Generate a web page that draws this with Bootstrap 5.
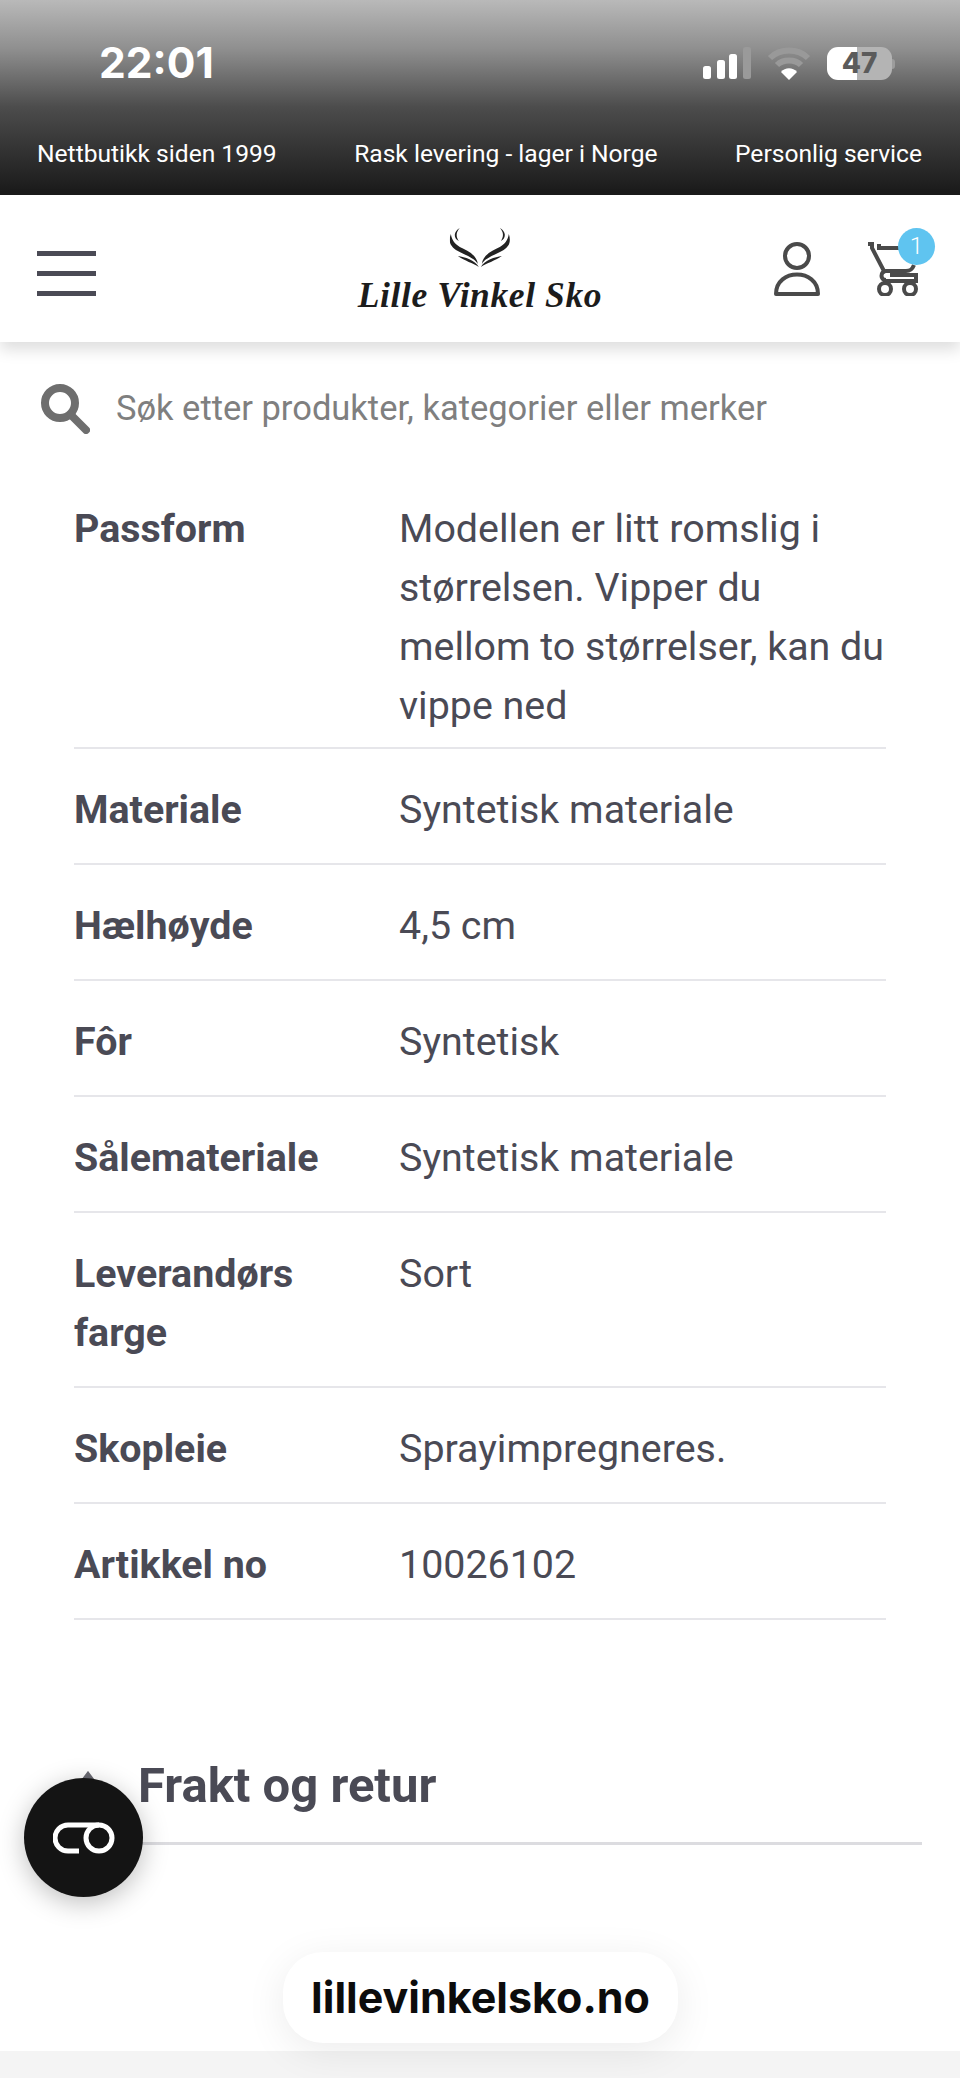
<!DOCTYPE html>
<html lang="no">
<head>
  <meta charset="UTF-8" />
  <meta name="viewport" content="width=device-width, initial-scale=1" />
  <title>Lille Vinkel Sko</title>
  <link href="https://cdn.jsdelivr.net/npm/bootstrap@5.3.3/dist/css/bootstrap.min.css" rel="stylesheet" />
  <style>
    body {
      background-color: #fff;
      color: #4a4a55;
      font-family: Roboto, sans-serif;
      min-height: 2078px;
    }

    .top-block {
      background: linear-gradient(#b9b9b9, #8f8f8f 25%, #4c4c4c 55%, #1b1b1b 98%);
      height: 195px;
      color: #fff;
    }

    .status-row {
      height: 127px;
      padding: 43px 65px 0 99px;
    }

    .status-icons {
      padding-top: 4px;
    }

    .clock {
      font-family: Inter, sans-serif;
      font-size: 42.5px;
      font-weight: 700;
      line-height: 40px;
    }

    .battery-pill {
      width: 65px;
      height: 33px;
      border-radius: 11px;
      background: linear-gradient(90deg, #fff 46%, #b4b4b4 46%);
      color: #5b5b5b;
      font-family: Inter, sans-serif;
      font-size: 28px;
      font-weight: 800;
      line-height: 33px;
      text-align: center;
    }

    .battery-nub {
      width: 3px;
      height: 10px;
      background: #9c9c9c;
      border-radius: 0 3px 3px 0;
    }

    .promo-row {
      padding: 0 38px 0 37px;
      font-size: 24.6px;
      line-height: 54px;
    }

    .site-header {
      height: 147px;
      padding: 0 42px 0 37px;
      box-shadow: 0 8px 14px rgba(0, 0, 0, .13);
    }

    .burger {
      width: 59px;
      gap: 15px;
      margin-top: 9px;
    }

    .burger span {
      height: 5px;
      background: #4a4a55;
    }

    .logo-box {
      left: 480px;
      top: 228px;
      transform: translateX(-50%);
    }

    .logo-mark {
      margin-bottom: 11px;
    }

    .logo-text {
      font-family: "Liberation Serif", serif;
      font-style: italic;
      font-weight: 700;
      font-size: 35.5px;
      line-height: 32px;
      color: #1c1c1c;
      letter-spacing: .6px;
      white-space: nowrap;
    }

    .cart-badge {
      width: 37px;
      height: 37px;
      top: -14px;
      right: -17px;
      background: #5fc4f0;
      color: #fff;
      font-size: 24px;
      font-weight: 300;
      line-height: 37px;
      text-align: center;
    }

    .search-row {
      height: 126px;
      padding: 7px 0 0 40px;
      gap: 26px;
    }

    .search-hint {
      color: #7f7f7f;
      font-size: 34.5px;
    }

    .spec-wrap {
      padding: 0 74px;
    }

    .spec-table {
      table-layout: fixed;
      margin: 0;
      font-size: 39.4px;
      line-height: 59px;
      color: #4a4a55;
    }

    .spec-table th,
    .spec-table td {
      padding: 31px 0 24px;
      border-bottom: 2px solid #e6e6ea;
      color: #4a4a55;
    }

    .spec-table tr:first-child th,
    .spec-table tr:first-child td {
      padding-bottom: 12px;
    }

    .spec-table th {
      width: 325px;
      padding-right: 30px;
      font-weight: 700;
    }

    .spec-table td {
      font-weight: 400;
    }

    .shipping-head {
      margin: 126px 38px 0 74px;
      height: 99px;
      gap: 36px;
      border-bottom: 3px solid #dcdce0;
      font-size: 49px;
      font-weight: 700;
      line-height: 80px;
    }

    .shipping-arrow {
      margin-top: 25px;
    }

    .page-band {
      height: 27px;
      background: #f4f4f4;
      margin-top: auto;
    }

    .chat-btn {
      width: 119px;
      height: 119px;
      left: 24px;
      top: 1778px;
      background: #141414;
      box-shadow: 0 6px 26px rgba(0, 0, 0, .25);
    }

    .domain-pill {
      left: 283px;
      top: 1952px;
      width: 395px;
      height: 91px;
      border-radius: 40px;
      background: #fff;
      color: #0c0c0c;
      font-family: Inter, sans-serif;
      font-size: 43px;
      font-weight: 700;
      line-height: 91px;
      text-align: center;
      box-shadow: 0 8px 40px rgba(0, 0, 0, .08);
    }
  </style>
</head>
<body class="d-flex flex-column position-relative overflow-hidden">

  <!-- Phone status bar and promo strip -->
  <div class="top-block">
    <div class="status-row d-flex justify-content-between">
      <div class="clock">22:01</div>
      <div class="status-icons d-flex align-items-center gap-2 align-self-start">
        <svg width="56" height="33" viewBox="0 0 56 33">
          <rect x="0" y="19" width="8" height="13" rx="2.5" fill="#fff"/>
          <rect x="14" y="13" width="8" height="19" rx="2.5" fill="#fff"/>
          <rect x="26" y="7" width="8" height="25" rx="2.5" fill="#fff"/>
          <rect x="40" y="0" width="8" height="32" rx="2.5" fill="#9a9a9a"/>
        </svg>
        <svg width="44" height="33" viewBox="0 0 44 33" class="me-2">
          <path d="M3 11C13 1 31 1 41 11" fill="none" stroke="#999" stroke-width="6"/>
          <path d="M10 18C16 12 28 12 34 18" fill="none" stroke="#999" stroke-width="6"/>
          <path d="M14 25C18 20 26 20 30 25L22 33Z" fill="#fff"/>
        </svg>
        <div class="d-flex align-items-center">
          <div class="battery-pill">47</div>
          <div class="battery-nub"></div>
        </div>
      </div>
    </div>
    <div class="promo-row d-flex justify-content-between">
      <span>Nettbutikk siden 1999</span>
      <span>Rask levering - lager i Norge</span>
      <span>Personlig service</span>
    </div>
  </div>

  <!-- Header -->
  <header class="site-header bg-white d-flex align-items-center justify-content-between position-relative">
    <div class="burger d-flex flex-column"><span></span><span></span><span></span></div>
    <div class="d-flex align-items-center">
      <svg width="46" height="54" viewBox="0 0 46 54" fill="none" stroke="#4a4a4a" stroke-width="4">
        <circle cx="23" cy="14" r="12"/>
        <path d="M2 52C2 26 44 26 44 52Z" stroke-linejoin="round"/>
      </svg>
      <div class="position-relative ms-5">
        <svg width="50" height="54" viewBox="0 0 50 54" fill="none" stroke="#4a4a4a" stroke-width="4" class="d-block">
          <path d="M0 2H4V6L17 31" />
          <path d="M11 2V6H32"/>
          <path d="M46 23C44 28 42 29 38 29H18C12 30 12 38 18 38"/>
          <path d="M22 33H48V39H15"/>
          <circle cx="17" cy="47" r="6"/>
          <circle cx="42" cy="47" r="6"/>
        </svg>
        <div class="cart-badge position-absolute rounded-circle">1</div>
      </div>
    </div>
  </header>

  <!-- Logo sits centred over the header -->
  <div class="logo-box position-absolute text-center">
    <svg width="60" height="40" viewBox="0 0 60 40" fill="#222" class="logo-mark d-block mx-auto">
      <g id="antler">
        <path d="M10 0C4 3 3 10 9 13C6 9 6 4 10 0Z"/>
        <path d="M1 6C-2 14 1 19 8 23C15 27 25 30 28 36C27 27 17 22 10 19C5 16 2 12 1 6Z"/>
        <path d="M8 28C15 29 25 32 29 39C23 35 15 33 8 28Z"/>
      </g>
      <use href="#antler" transform="matrix(-1 0 0 1 60 0)"/>
    </svg>
    <div class="logo-text">Lille Vinkel Sko</div>
  </div>

  <!-- Search -->
  <div class="search-row d-flex align-items-center">
    <svg width="50" height="50" viewBox="0 0 50 50" fill="none" stroke="#6e6e6e">
      <circle cx="20" cy="19" r="15" stroke-width="8"/>
      <path d="M31 31L46 46" stroke-width="8" stroke-linecap="round"/>
    </svg>
    <div class="search-hint">Søk etter produkter, kategorier eller merker</div>
  </div>

  <!-- Product specs -->
  <div class="spec-wrap">
    <table class="table spec-table">
      <tbody>
        <tr><th>Passform</th><td>Modellen er litt romslig i størrelsen. Vipper du mellom to størrelser, kan du vippe ned</td></tr>
        <tr><th>Materiale</th><td>Syntetisk materiale</td></tr>
        <tr><th>Hælhøyde</th><td>4,5 cm</td></tr>
        <tr><th>Fôr</th><td>Syntetisk</td></tr>
        <tr><th>Sålemateriale</th><td>Syntetisk materiale</td></tr>
        <tr><th>Leverandørs farge</th><td>Sort</td></tr>
        <tr><th>Skopleie</th><td>Sprayimpregneres.</td></tr>
        <tr><th>Artikkel no</th><td>10026102</td></tr>
      </tbody>
    </table>
  </div>

  <div class="shipping-head d-flex">
    <svg width="28" height="22" viewBox="0 0 28 22" fill="none" stroke="#6a6a72" stroke-width="5" class="shipping-arrow flex-shrink-0">
      <path d="M2 20L14 4L26 20"/>
    </svg>
    <span>Frakt og retur</span>
  </div>

  <div class="page-band"></div>

  <!-- Floating chat button and browser address pill -->
  <div class="chat-btn position-absolute rounded-circle d-flex align-items-center justify-content-center">
    <svg width="62" height="32" viewBox="0 0 62 32" fill="none" stroke="#fff" stroke-width="5">
      <path d="M26 29H15A13 13 0 0 1 15 3H46"/>
      <circle cx="46" cy="16" r="13"/>
    </svg>
  </div>
  <div class="domain-pill position-absolute">lillevinkelsko.no</div>

  <script src="https://cdn.jsdelivr.net/npm/bootstrap@5.3.3/dist/js/bootstrap.bundle.min.js"></script>
</body>
</html>
